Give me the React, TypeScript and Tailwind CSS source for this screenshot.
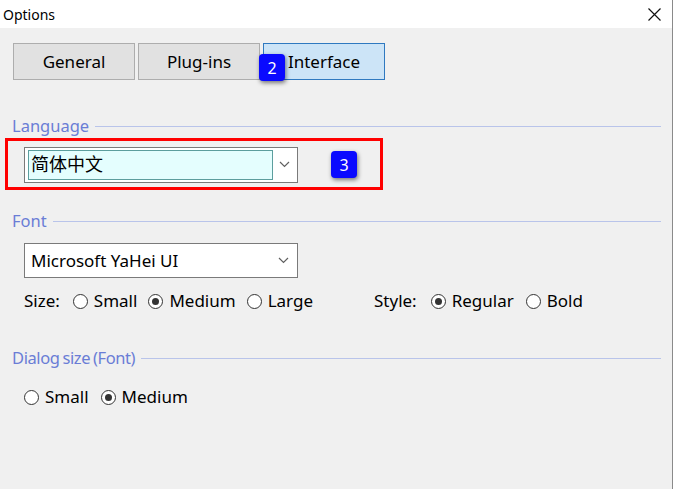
import React from 'react';

const font = { fontFamily: '"Noto Sans", "Noto Sans CJK SC", sans-serif' };

const Chevron: React.FC = () => (
  <svg width="11" height="7" viewBox="0 0 11 7" className="shrink-0">
    <path d="M1 1 L5.5 5.5 L10 1" fill="none" stroke="#606060" strokeWidth="1.2" />
  </svg>
);

const Radio: React.FC<{ label: string; checked?: boolean }> = ({ label, checked }) => (
  <div className="flex items-center gap-[6px]">
    <span className="w-[15px] h-[15px] rounded-full border border-[#333] bg-white flex items-center justify-center">
      {checked && <span className="w-[7px] h-[7px] rounded-full bg-[#333]" />}
    </span>
    <span>{label}</span>
  </div>
);

const SectionHeader: React.FC<{ title: string; tight?: boolean }> = ({ title, tight }) => (
  <div className="flex items-center h-[20px] gap-[6px] pr-[11px]">
    <span
      className={`text-[#6a7dd6] text-[16.5px] leading-[20px] whitespace-nowrap ${tight ? 'tracking-[-0.4px] [word-spacing:-1px]' : ''}`}
    >
      {title}
    </span>
    <div className="flex-1 h-px bg-[#b9c4ea]" />
  </div>
);

const Badge: React.FC<{ n: string; className?: string }> = ({ n, className }) => (
  <div
    className={`w-[26px] h-[27px] rounded-[4px] bg-[#0a0aff] text-white text-[16px] flex items-center justify-center shadow-[1px_2px_4px_rgba(0,0,0,0.5)] ${className ?? ''}`}
  >
    {n}
  </div>
);

const App: React.FC = () => {
  return (
    <div className="w-[675px] h-[489px] bg-white flex" style={font}>
      <div className="w-[673px] h-full border-r border-[#8a8a8a] flex flex-col bg-[#f0f0f0] text-[#000] text-[16px]">
        {/* title bar */}
        <div className="h-[28px] bg-white flex items-center justify-between pl-[3px] pr-[11px] shrink-0">
          <span className="text-[14px] text-[#000]">Options</span>
          <svg width="13" height="13" viewBox="0 0 13 13">
            <path d="M0.5 0.5 L12.5 12.5 M12.5 0.5 L0.5 12.5" stroke="#111" strokeWidth="1.2" />
          </svg>
        </div>

        <div className="flex flex-col pl-[12px]">
          {/* tabs */}
          <div className="relative flex gap-[3px] mt-[15px] ml-px">
            <div className="w-[122px] h-[37px] bg-[#e1e1e1] border border-[#adadad] flex items-center justify-center text-[17px]">General</div>
            <div className="w-[122px] h-[37px] bg-[#e1e1e1] border border-[#adadad] flex items-center justify-center text-[17px]">Plug-ins</div>
            <div className="w-[122px] h-[37px] bg-[#cce4f7] border border-[#2f79c0] flex items-center justify-center text-[17px]">Interface</div>
            <Badge n="2" className="absolute left-[246px] top-[11px]" />
          </div>

          {/* language */}
          <div className="mt-[36px]">
            <SectionHeader title="Language" />
          </div>
          <div className="mt-[2px] -ml-[7px] w-[378px] h-[52px] border-[3px] border-[#ff0000] flex items-center pl-[16px] pt-[1px] gap-[33px]">
            <div className="w-[274px] h-[36px] bg-white border border-[#7a7a7a] flex items-center pl-[3px] pr-[7px] gap-[6px]">
              <div className="flex-1 h-[30px] bg-[#e4fefe] border border-[#5c9e9e] flex items-center pl-[2px] text-[18px]">简体中文</div>
              <Chevron />
            </div>
            <Badge n="3" />
          </div>

          {/* font */}
          <div className="mt-[21px]">
            <SectionHeader title="Font" />
          </div>
          <div className="mt-[12px] ml-[12px] w-[274px] h-[35px] bg-white border border-[#7a7a7a] flex items-center justify-between pl-[6px] pr-[8px]">
            <span className="text-[17px]">Microsoft YaHei UI</span>
            <Chevron />
          </div>
          <div className="mt-[13px] ml-[12px] h-[20px] flex items-center text-[17px]">
            <span className="mr-[13px]">Size:</span>
            <div className="flex items-center gap-[11px]">
              <Radio label="Small" />
              <Radio label="Medium" checked />
              <Radio label="Large" />
            </div>
            <span className="ml-[61px] mr-[14px]">Style:</span>
            <div className="flex items-center gap-[12px]">
              <Radio label="Regular" checked />
              <Radio label="Bold" />
            </div>
          </div>

          {/* dialog size */}
          <div className="mt-[37px]">
            <SectionHeader title="Dialog size (Font)" tight />
          </div>
          <div className="mt-[19px] ml-[12px] h-[20px] flex items-center gap-[12px] text-[17px]">
            <Radio label="Small" />
            <Radio label="Medium" checked />
          </div>
        </div>
      </div>
    </div>
  );
};

export default App;
